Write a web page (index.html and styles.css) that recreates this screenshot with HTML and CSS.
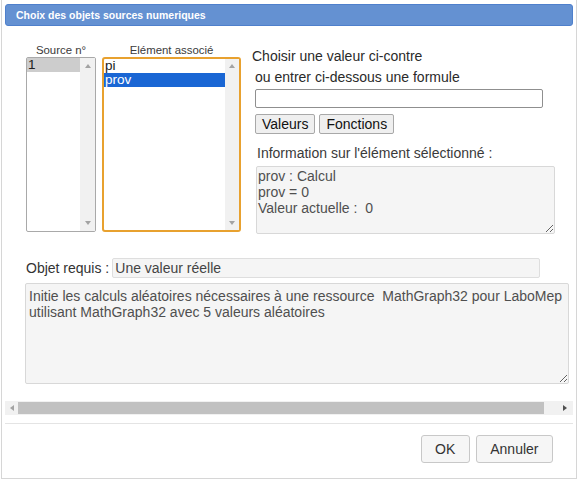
FILE: index.html
```html
<!DOCTYPE html>
<html lang="fr">
<head>
<meta charset="utf-8">
<title>Choix des objets sources numeriques</title>
<link rel="stylesheet" href="styles.css">
</head>
<body>
<div class="dialog">
  <div class="titlebar">Choix des objets sources numeriques</div>

  <div class="pane">
    <div class="top-row">
      <div class="list-col src-col">
        <div class="list-caption">Source n°</div>
        <div class="listbox">
          <div class="list-items">
            <div class="item item-current">1</div>
          </div>
          <div class="vscroll"><span class="arrow-up"></span><span class="arrow-down"></span></div>
        </div>
      </div>
      <div class="list-col elt-col">
        <div class="list-caption">Elément associé</div>
        <div class="listbox listbox-focus">
          <div class="list-items">
            <div class="item">pi</div>
            <div class="item item-selected">prov</div>
          </div>
          <div class="vscroll"><span class="arrow-up"></span><span class="arrow-down"></span></div>
        </div>
      </div>
      <div class="formula-col">
        <div class="hint">Choisir une valeur ci-contre</div>
        <div class="hint hint-sub">ou entrer ci-dessous une formule</div>
        <input class="formula-input" type="text">
        <div class="tool-buttons">
          <button class="tool-btn">Valeurs</button>
          <button class="tool-btn">Fonctions</button>
        </div>
        <div class="info-label">Information sur l'élément sélectionné :</div>
        <textarea class="info-area" readonly>prov : Calcul
prov = 0
Valeur actuelle :  0</textarea>
      </div>
    </div>

    <div class="required-row">
      <span class="required-label">Objet requis :</span>
      <input class="required-input" type="text" value="Une valeur réelle" readonly>
    </div>
    <textarea class="desc-area" readonly>Initie les calculs aléatoires nécessaires à une ressource  MathGraph32 pour LaboMep utilisant MathGraph32 avec 5 valeurs aléatoires</textarea>
  </div>

  <div class="hscroll">
    <span class="arrow-left"></span>
    <div class="hscroll-thumb"></div>
    <span class="arrow-right"></span>
  </div>

  <div class="button-pane">
    <button class="dlg-btn ok-btn">OK</button>
    <button class="dlg-btn">Annuler</button>
  </div>
</div>
</body>
</html>
```

FILE: styles.css
```css
* {
  box-sizing: border-box;
}

body {
  margin: 0;
  background: #ffffff;
  font-family: "Liberation Sans", Arial, sans-serif;
  color: #333333;
}

.dialog {
  margin-left: 1px;
  width: 576px;
  height: 479px;
  border: 1px solid #d6d6d6;
  border-top: none;
  padding: 4px 3px 0;
  background: #ffffff;
}

.titlebar {
  height: 22px;
  background: #6491d2;
  border: 1px solid #4f80cc;
  border-radius: 3px;
  color: #ffffff;
  font-weight: bold;
  font-size: 10.5px;
  line-height: 20px;
  padding-left: 10px;
}

.pane {
  padding-left: 21px;
}

.top-row {
  display: flex;
  margin-top: 17px;
}

.list-col {
  display: flex;
  flex-direction: column;
}

.src-col {
  width: 70px;
}

.elt-col {
  width: 139px;
  margin-left: 6px;
}

.list-caption {
  font-size: 11.4px;
  line-height: 14px;
  height: 14px;
  text-align: center;
  color: #3a3a3a;
}

.listbox {
  display: flex;
  height: 175px;
  border: 1px solid #a9a9a9;
  border-radius: 2px;
  background: #ffffff;
}

.listbox-focus {
  border: 2px solid #e8a12f;
  border-radius: 3px;
}

.list-items {
  flex: 1;
}

.item {
  font-size: 13.5px;
  line-height: 14px;
  height: 14px;
  padding-left: 1px;
  color: #222222;
}

.item-current {
  background: #cdcdcd;
}

.item-selected {
  background: #1a66d4;
  color: #ffffff;
}

.vscroll {
  width: 15px;
  background: #f1f1f1;
  display: flex;
  flex-direction: column;
  justify-content: space-between;
  align-items: center;
  padding: 6px 0 6px;
}

.listbox-focus .vscroll {
  width: 14px;
  padding: 5px 0 5px;
}

.arrow-up {
  width: 0;
  height: 0;
  border-left: 3.5px solid transparent;
  border-right: 3.5px solid transparent;
  border-bottom: 4px solid #a3a3a3;
}

.arrow-down {
  width: 0;
  height: 0;
  border-left: 3.5px solid transparent;
  border-right: 3.5px solid transparent;
  border-top: 4px solid #a3a3a3;
}

.formula-col {
  display: flex;
  flex-direction: column;
  align-items: flex-start;
  margin-left: 11px;
  margin-top: 5px;
}

.hint {
  font-size: 14px;
  line-height: 16px;
  color: #2a2a2a;
}

.hint-sub {
  margin-top: 5px;
  padding-left: 3px;
}

.formula-input {
  margin: 4px 0 0 3px;
  width: 288px;
  height: 19px;
  border: 1px solid #8f8f8f;
  border-radius: 2px;
  background: #ffffff;
  padding: 0 3px;
  font: 14px "Liberation Sans", Arial, sans-serif;
}

.tool-buttons {
  display: flex;
  gap: 4px;
  margin: 6px 0 0 3px;
}

.tool-btn {
  height: 20px;
  padding: 0 6px;
  border: 1px solid #a8a8a8;
  border-radius: 2px;
  background: #efefef;
  font: 14px "Liberation Sans", Arial, sans-serif;
  line-height: 18px;
  color: #111111;
}

.info-label {
  margin: 11px 0 0 5px;
  font-size: 14px;
  line-height: 16px;
  color: #3a3a3a;
}

.info-area {
  display: block;
  margin: 5px 0 0 4px;
  width: 299px;
  height: 68px;
  border: 1px solid #d8d8d8;
  border-radius: 2px;
  background: #f5f5f5;
  padding: 1px 1px;
  font: 14px "Liberation Sans", Arial, sans-serif;
  line-height: 16px;
  color: #4f4f4f;
  overflow: hidden;
}

.required-row {
  display: flex;
  align-items: center;
  margin-top: 24px;
}

.required-label {
  font-size: 14px;
  line-height: 16px;
  color: #333333;
}

.required-input {
  margin-left: 3px;
  width: 428px;
  height: 20px;
  border: 1px solid #dedede;
  border-radius: 2px;
  background: #f5f5f5;
  padding: 0 2px;
  font: 14px "Liberation Sans", Arial, sans-serif;
  color: #444444;
}

.desc-area {
  display: block;
  margin: 5px 0 0 -1px;
  width: 544px;
  height: 101px;
  border: 1px solid #d8d8d8;
  border-radius: 2px;
  background: #f5f5f5;
  padding: 4px 3px;
  font: 14px "Liberation Sans", Arial, sans-serif;
  line-height: 16px;
  color: #4f4f4f;
  white-space: pre-wrap;
  overflow: hidden;
}

.hscroll {
  display: flex;
  align-items: center;
  height: 14px;
  margin-top: 17px;
  background: #f1f1f1;
}

.arrow-left {
  width: 0;
  height: 0;
  margin: 0 4px 0 5px;
  border-top: 3.5px solid transparent;
  border-bottom: 3.5px solid transparent;
  border-right: 4px solid #a3a3a3;
}

.hscroll-thumb {
  width: 526px;
  height: 12px;
  background: #c1c1c1;
}

.arrow-right {
  width: 0;
  height: 0;
  margin-left: auto;
  margin-right: 6px;
  border-top: 3.5px solid transparent;
  border-bottom: 3.5px solid transparent;
  border-left: 4px solid #505050;
}

.button-pane {
  display: flex;
  justify-content: flex-end;
  gap: 6px;
  margin-top: 8px;
  border-top: 1px solid #e4e4e4;
  padding: 11px 20px 0 0;
}

.dlg-btn {
  height: 28px;
  padding: 0 13.5px;
  border: 1px solid #c8c8c8;
  border-radius: 3px;
  background: #f6f6f6;
  font: 14px "Liberation Sans", Arial, sans-serif;
  color: #333333;
}

.ok-btn {
  width: 49px;
  padding: 0;
}
```
